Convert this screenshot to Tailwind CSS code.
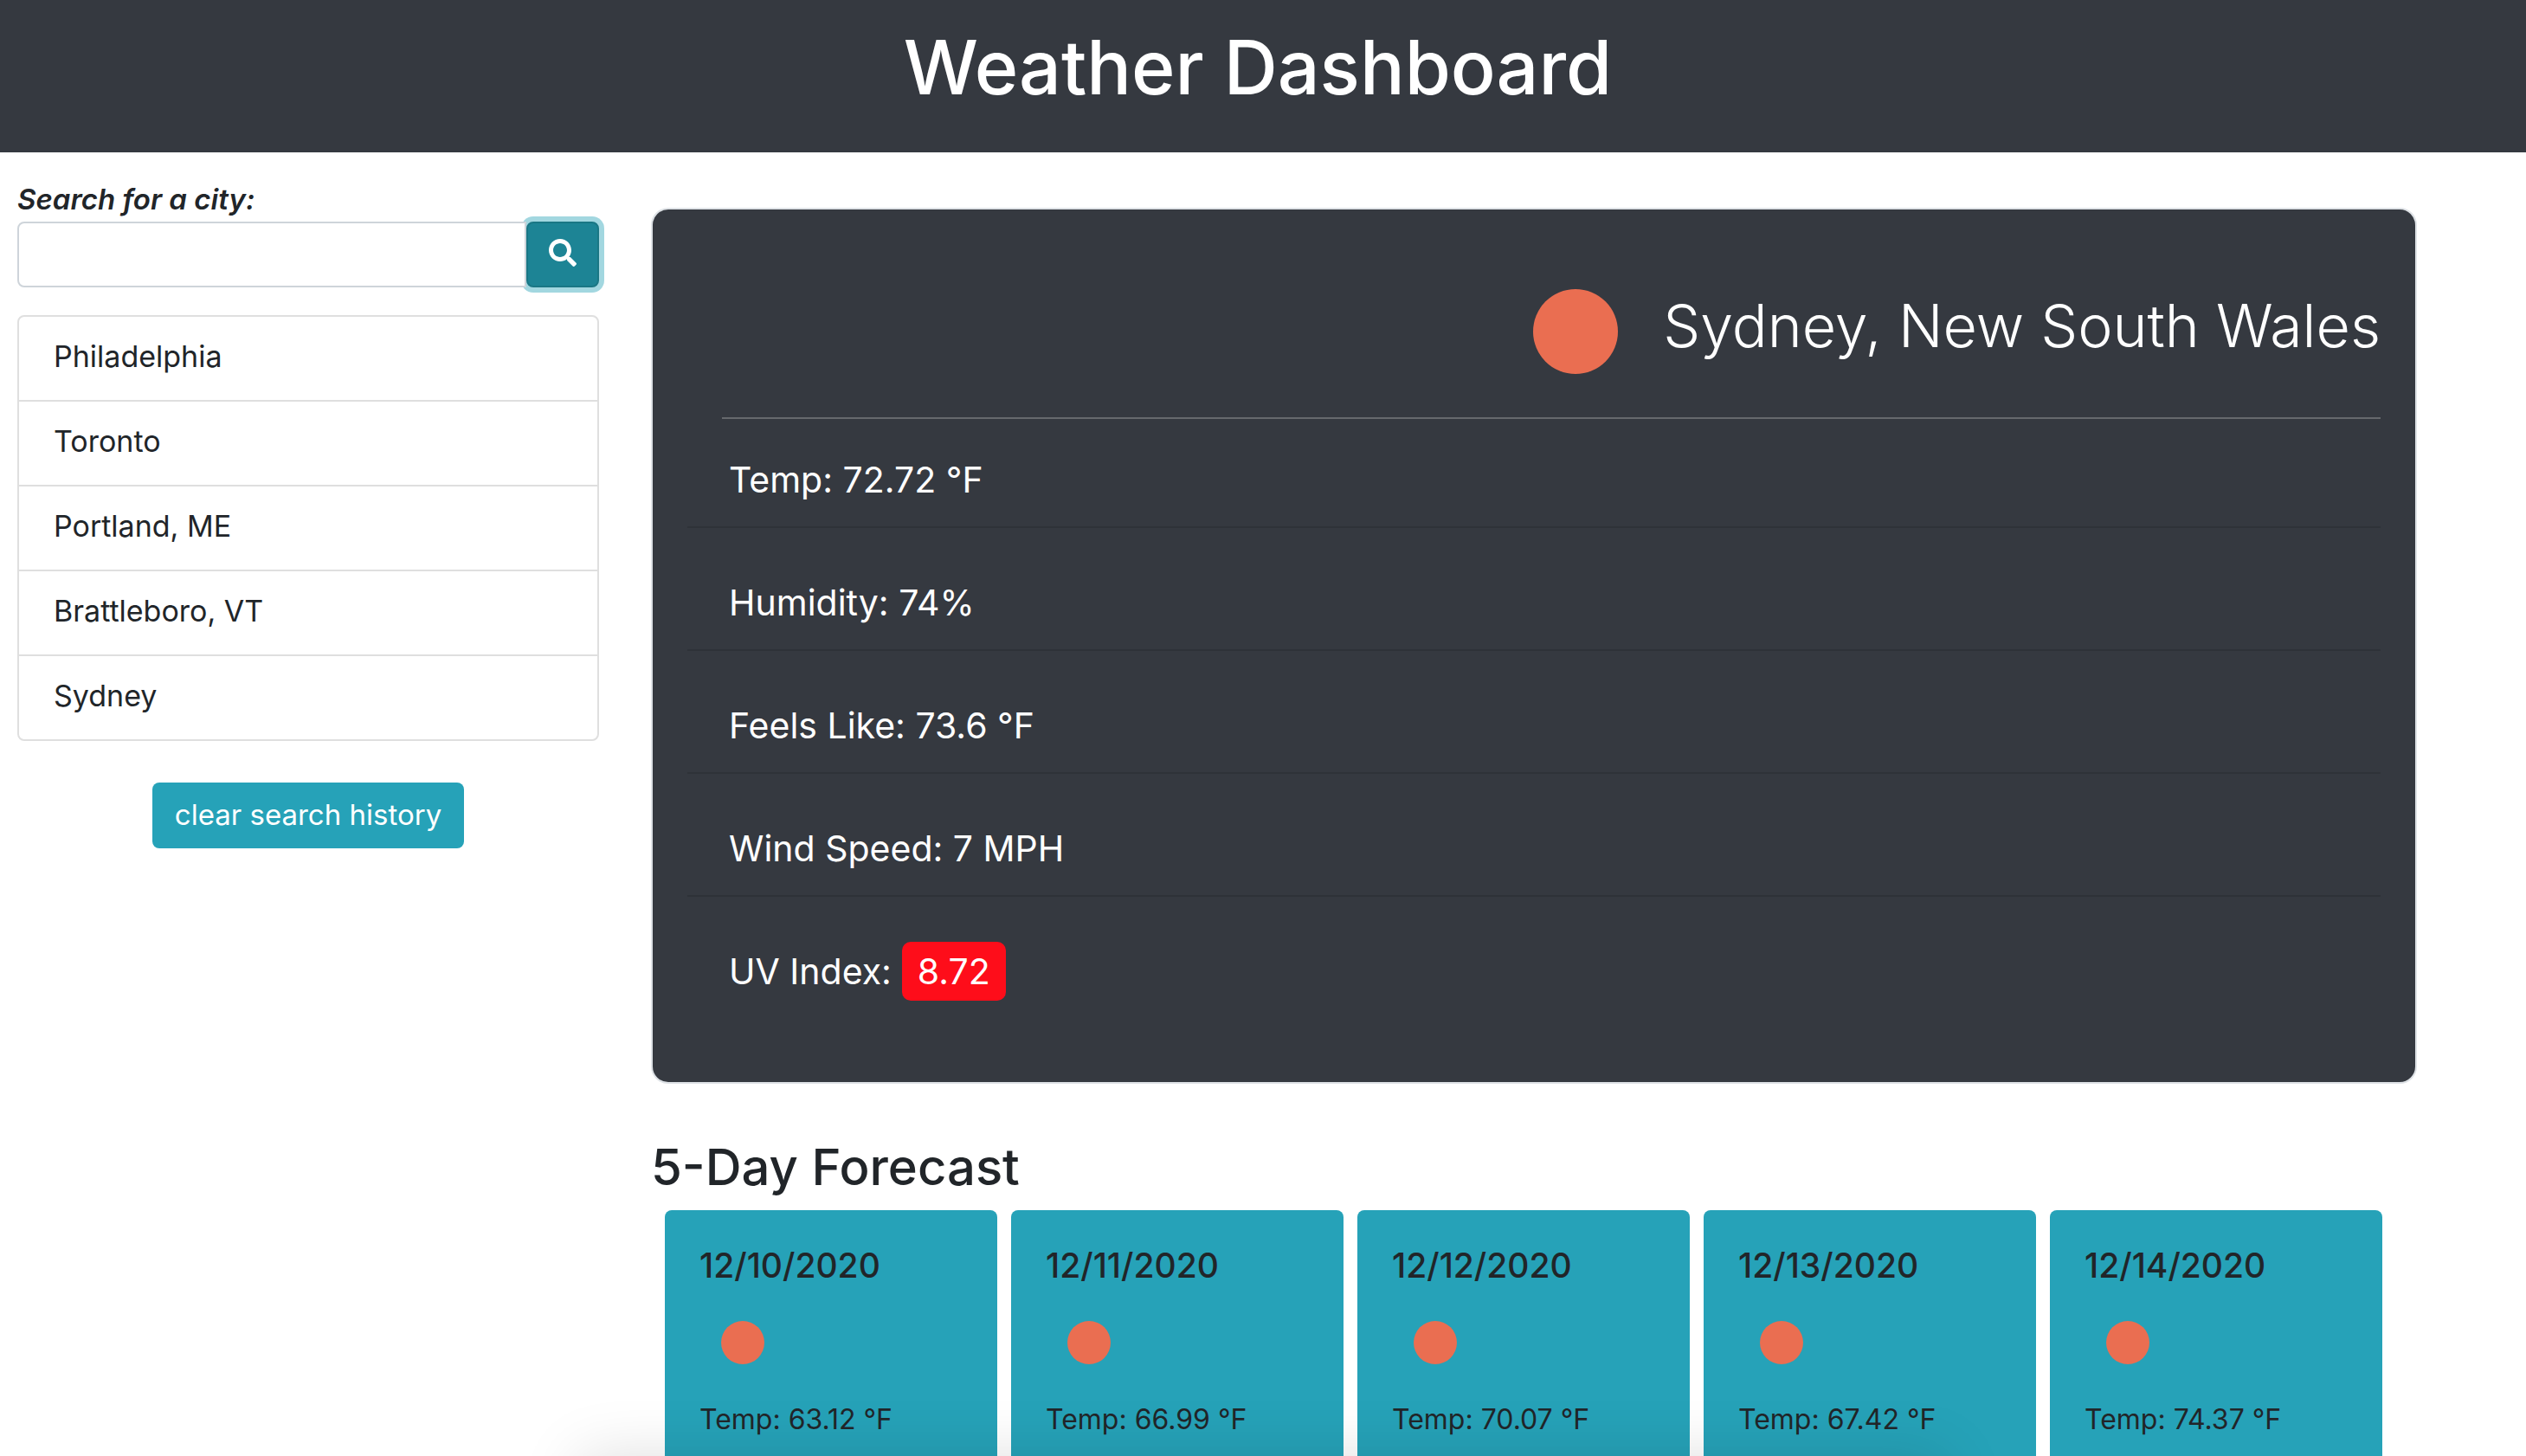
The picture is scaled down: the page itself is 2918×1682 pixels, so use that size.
<!DOCTYPE html>
<html lang="en">
<head>
<meta charset="utf-8">
<title>Weather Dashboard</title>
<meta name="viewport" content="width=device-width, initial-scale=1">
<script src="https://cdn.jsdelivr.net/npm/@tailwindcss/browser@4"></script>
</head>
<body class="bg-white font-['Inter',sans-serif] text-[33px] leading-12 text-[#212529]">
  <header class="h-44 bg-[#353940] pt-[30px] pr-3 text-center">
    <h1 class="text-[86px] leading-24 font-medium text-white">Weather Dashboard</h1>
  </header>

  <div class="flex pr-[126px] pl-5">
    <aside class="w-[672px] shrink-0 pt-[30px]">
      <form onsubmit="return false">
        <label for="city" class="block font-semibold italic">Search for a city:</label>
        <div class="mt-[2px] flex h-19">
          <input id="city" type="text" class="relative z-10 min-w-0 flex-1 rounded-l-lg border-2 border-[#ced4da] bg-white px-6 outline-none">
          <button type="submit" aria-label="Search" class="flex w-[84px] items-center justify-center rounded-lg border-2 border-[#1a7785] bg-[#1d8495] pb-1 ring-6 ring-[#a2d7e0]">
            <svg class="size-8 text-white" viewBox="0 0 512 512" fill="currentColor" aria-hidden="true"><path d="M505 442.700L405.300 343c-4.500-4.500-10.600-7-17-7H372c27.600-35.300 44-79.700 44-128C416 93.100 322.900 0 208 0S0 93.100 0 208s93.100 208 208 208c48.300 0 92.700-16.400 128-44v16.300c0 6.400 2.500 12.500 7 17l99.700 99.700c9.400 9.400 24.600 9.400 33.900 0l28.300-28.300c9.400-9.400 9.400-24.600.1-34zM208 336c-70.700 0-128-57.200-128-128 0-70.700 57.200-128 128-128 70.700 0 128 57.200 128 128 0 70.700-57.200 128-128 128z"/></svg>
          </button>
        </div>
      </form>
      <ul class="mt-8 divide-y-2 divide-[#dfdfdf] rounded-lg border-2 border-[#dfdfdf] text-[34px]">
        <li class="px-10 pt-[22px] pb-[26px]">Philadelphia</li>
        <li class="px-10 pt-[22px] pb-[26px]">Toronto</li>
        <li class="px-10 pt-[22px] pb-[26px]">Portland, ME</li>
        <li class="px-10 pt-[22px] pb-[26px]">Brattleboro, VT</li>
        <li class="px-10 pt-[22px] pb-[26px]">Sydney</li>
      </ul>
      <div class="mt-12 flex justify-center">
        <button type="button" class="h-19 w-[360px] rounded-lg bg-[#26a2b8] pb-[2px] text-white">clear search history</button>
      </div>
    </aside>

    <main class="ml-15 min-w-0 flex-1">
      <section class="mt-16 rounded-[20px] border-2 border-[#dee2e6] bg-[#353940] px-10 pt-20 pb-18 text-[41px] text-white">
        <div class="ml-10 flex h-[162px] items-start justify-end gap-13 border-b-2 border-[#66696d]">
          <span class="mt-3 size-[98px] rounded-full bg-[#ea6e51]" role="img" aria-label="Clear sky"></span>
          <h2 class="text-[68px] leading-27 font-light">Sydney, New South Wales</h2>
        </div>
        <ul class="divide-y-2 divide-[#2e3238]">
          <li class="flex h-[126px] items-center px-12 pt-4">Temp: 72.72 °F</li>
          <li class="flex h-[142px] items-center px-12 pt-8">Humidity: 74%</li>
          <li class="flex h-[142px] items-center px-12 pt-8">Feels Like: 73.6 °F</li>
          <li class="flex h-[142px] items-center px-12 pt-8">Wind Speed: 7 MPH</li>
          <li class="flex h-[142px] items-center gap-3 px-12 pt-[30px]">UV Index: <span class="rounded-[10px] bg-[#fe0d1a] px-[18px] py-2 leading-13">8.72</span></li>
        </ul>
      </section>

      <section class="mt-16">
        <h2 class="text-[58px] leading-16 font-medium">5-Day Forecast</h2>
        <div class="mt-[18px] mr-10 ml-4 grid grid-cols-5 gap-4 text-[32px]">
          <article class="rounded-lg bg-[#26a2b8] px-10 pt-10 pb-20">
            <h3 class="text-[39px] font-medium">12/10/2020</h3>
            <div class="mt-10 ml-[25px] size-[50px] rounded-full bg-[#ea6e51]" role="img" aria-label="Clear sky"></div>
            <p class="mt-10">Temp: 63.12 °F</p>
          </article>
          <article class="rounded-lg bg-[#26a2b8] px-10 pt-10 pb-20">
            <h3 class="text-[39px] font-medium">12/11/2020</h3>
            <div class="mt-10 ml-[25px] size-[50px] rounded-full bg-[#ea6e51]" role="img" aria-label="Clear sky"></div>
            <p class="mt-10">Temp: 66.99 °F</p>
          </article>
          <article class="rounded-lg bg-[#26a2b8] px-10 pt-10 pb-20">
            <h3 class="text-[39px] font-medium">12/12/2020</h3>
            <div class="mt-10 ml-[25px] size-[50px] rounded-full bg-[#ea6e51]" role="img" aria-label="Clear sky"></div>
            <p class="mt-10">Temp: 70.07 °F</p>
          </article>
          <article class="rounded-lg bg-[#26a2b8] px-10 pt-10 pb-20">
            <h3 class="text-[39px] font-medium">12/13/2020</h3>
            <div class="mt-10 ml-[25px] size-[50px] rounded-full bg-[#ea6e51]" role="img" aria-label="Clear sky"></div>
            <p class="mt-10">Temp: 67.42 °F</p>
          </article>
          <article class="rounded-lg bg-[#26a2b8] px-10 pt-10 pb-20">
            <h3 class="text-[39px] font-medium">12/14/2020</h3>
            <div class="mt-10 ml-[25px] size-[50px] rounded-full bg-[#ea6e51]" role="img" aria-label="Clear sky"></div>
            <p class="mt-10">Temp: 74.37 °F</p>
          </article>
        </div>
      </section>
    </main>
  </div>
  <!-- soft shadow along the bottom edge of the window -->
  <div class="pointer-events-none fixed inset-x-0 -bottom-40 mx-auto h-40 w-[1580px] shadow-[0_0_70px_0_rgba(0,0,0,0.13)]"></div>
</body>
</html>
